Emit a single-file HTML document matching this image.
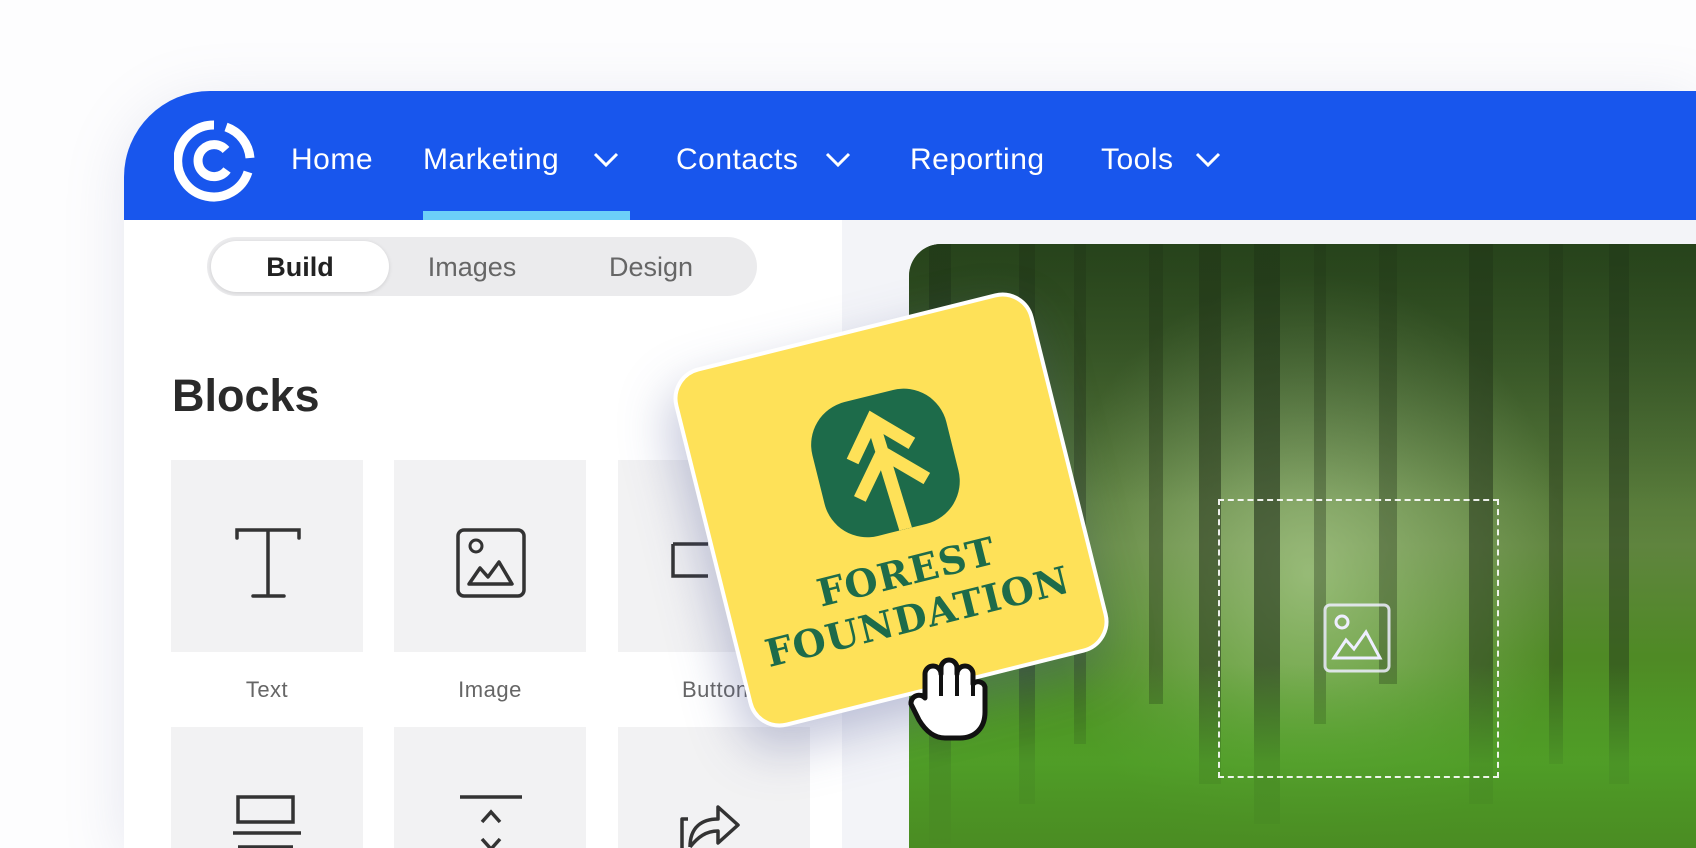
<!DOCTYPE html>
<html style="width:1696px;height:848px;overflow:hidden"><head><meta charset="utf-8"><style>
*{margin:0;padding:0;box-sizing:border-box}
body{width:1696px;height:848px;overflow:hidden;background:#fdfdfe;font-family:"Liberation Sans",sans-serif;position:relative}
.abs{position:absolute}
#frame{left:124px;top:91px;width:1572px;height:757px;border-top-left-radius:86px;overflow:hidden;background:#f3f4f8;box-shadow:0 10px 60px rgba(120,130,170,.18)}
#nav{left:0;top:0;width:100%;height:129px;background:#1856ed}
.nl{position:absolute;top:52px;color:#fff;font-size:30px;letter-spacing:.5px}
.chev{position:absolute;top:60px}
#side{left:0;top:129px;width:718px;height:628px;background:#fff;overflow:hidden}
#seg{left:83px;top:17px;width:550px;height:59px;border-radius:30px;background:#ebebed}
#pill{left:4px;top:4px;width:178px;height:51px;border-radius:26px;background:#fff;box-shadow:0 1px 4px rgba(0,0,0,.12)}
.st{position:absolute;top:15px;font-size:27px;color:#666;width:160px;text-align:center}
.tile{position:absolute;width:192px;height:192px;background:#f2f2f3}
.lab{position:absolute;top:457px;width:192px;text-align:center;font-size:22px;color:#666;letter-spacing:.5px}
#img{left:785px;top:153px;width:787px;height:604px;border-top-left-radius:32px;overflow:hidden;
background:radial-gradient(ellipse 260px 300px at 400px 330px,rgba(200,230,170,.55),rgba(0,0,0,0)),
linear-gradient(180deg,#2f4a22 0%,#4d6e35 30%,#5f843e 50%,#4f8a25 68%,#4e9323 85%,#3f7a1a 100%)}
.tr{position:absolute;top:0;background:#22301a}
</style></head><body>
<div id="frame" class="abs">
 <div id="nav" class="abs">
  <svg class="abs" style="left:50px;top:29px" width="82" height="82" viewBox="0 0 82 82">
   <path d="M52 7 A36 36 0 0 1 76 38" stroke="#fff" stroke-width="9" fill="none"/>
   <path d="M74 52 A36 36 0 1 1 40 5" stroke="#fff" stroke-width="9" fill="none"/>
   <path d="M52 30 A16 16 0 1 0 53 50" stroke="#fff" stroke-width="9" fill="none"/>
  </svg>
  <div class="nl" style="left:167px">Home</div>
  <div class="nl" style="left:299px">Marketing</div>
  <svg class="chev" style="left:468px" width="28" height="18"><path d="M3 3 L14 14 L25 3" stroke="#fff" stroke-width="3" fill="none"/></svg>
  <div class="nl" style="left:552px">Contacts</div>
  <svg class="chev" style="left:700px" width="28" height="18"><path d="M3 3 L14 14 L25 3" stroke="#fff" stroke-width="3" fill="none"/></svg>
  <div class="nl" style="left:786px">Reporting</div>
  <div class="nl" style="left:977px">Tools</div>
  <svg class="chev" style="left:1070px" width="28" height="18"><path d="M3 3 L14 14 L25 3" stroke="#fff" stroke-width="3" fill="none"/></svg>
  <div class="abs" style="left:299px;top:120px;width:207px;height:9px;background:#6ccff8"></div>
 </div>
 <div id="side" class="abs">
  <div id="seg" class="abs"><div id="pill" class="abs"></div>
   <div class="st" style="left:13px;color:#222;font-weight:bold">Build</div>
   <div class="st" style="left:185px">Images</div>
   <div class="st" style="left:364px">Design</div>
  </div>
  <div class="abs" style="left:48px;top:150px;font-size:45px;font-weight:bold;color:#2a2a2a">Blocks</div>
  <div class="tile" style="left:47px;top:240px"><svg width="192" height="192"><path d="M66 78 V70 H128 V78 M97 70 V136 M82 136 H113" stroke="#333" stroke-width="3.5" fill="none" stroke-linecap="round"/></svg></div>
  <div class="tile" style="left:270px;top:240px"><svg width="192" height="192"><rect x="64" y="70" width="66" height="66" rx="6" stroke="#333" stroke-width="3.5" fill="none"/><circle cx="82" cy="86" r="6" stroke="#333" stroke-width="3" fill="none"/><path d="M75 124 L86 108 L94 117 L105 102 L118 124 Z" stroke="#333" stroke-width="3.5" fill="none" stroke-linejoin="round"/></svg></div>
  <div class="tile" style="left:494px;top:240px"><svg width="192" height="192"><path d="M55 84 V116 H90 M55 84 H90" stroke="#333" stroke-width="3.5" fill="none"/></svg></div>
  <div class="lab" style="left:47px">Text</div>
  <div class="lab" style="left:270px">Image</div>
  <div class="lab" style="left:494px;text-align:left;padding-left:64px">Button</div>
  <div class="tile" style="left:47px;top:507px"><svg width="192" height="192"><rect x="67" y="70" width="55" height="25" stroke="#333" stroke-width="3.5" fill="none"/><path d="M62 106 H130 M67 120 H122" stroke="#333" stroke-width="3.5"/></svg></div>
  <div class="tile" style="left:270px;top:507px"><svg width="192" height="192"><path d="M66 70 H128 M88 95 L97 85 L106 95 M88 112 L97 122 L106 112" stroke="#333" stroke-width="3.5" fill="none"/></svg></div>
  <div class="tile" style="left:494px;top:507px"><svg width="192" height="192"><path d="M70 92 H64 V130 M72 120 C72 100 84 92 100 92 V80 L120 98 L100 116 V104 C88 104 80 110 72 120" stroke="#333" stroke-width="3.5" fill="none" stroke-linejoin="round"/></svg></div>
 </div>
 <div id="img" class="abs">
  <div class="tr" style="left:20px;width:22px;height:600px;opacity:.6"></div>
  <div class="tr" style="left:110px;width:16px;height:560px;opacity:.5"></div>
  <div class="tr" style="left:165px;width:12px;height:500px;opacity:.4"></div>
  <div class="tr" style="left:240px;width:14px;height:460px;opacity:.4"></div>
  <div class="tr" style="left:290px;width:22px;height:540px;opacity:.55"></div>
  <div class="tr" style="left:345px;width:26px;height:580px;opacity:.6"></div>
  <div class="tr" style="left:405px;width:12px;height:480px;opacity:.35"></div>
  <div class="tr" style="left:470px;width:18px;height:440px;opacity:.35"></div>
  <div class="tr" style="left:560px;width:24px;height:560px;opacity:.5"></div>
  <div class="tr" style="left:640px;width:14px;height:520px;opacity:.4"></div>
  <div class="tr" style="left:700px;width:20px;height:540px;opacity:.45"></div>
  <div class="abs" style="left:0;top:0;width:787px;height:260px;background:linear-gradient(180deg,rgba(30,60,20,.5),rgba(60,100,40,0))"></div>
  <div class="abs" style="left:0;top:420px;width:787px;height:200px;background:linear-gradient(180deg,rgba(80,150,40,0),rgba(80,160,40,.8) 50%,#4a8a22)"></div>
  <div class="abs" style="left:309px;top:255px;width:281px;height:279px;border:2px dashed rgba(255,255,255,.9)"></div>
  <svg class="abs" style="left:413px;top:358px" width="70" height="72"><rect x="3" y="3" width="64" height="66" rx="5" stroke="#eef" stroke-width="3" fill="none" opacity=".85"/><circle cx="20" cy="20" r="6" stroke="#eef" stroke-width="3" fill="none"/><path d="M12 56 L24 38 L32 47 L44 30 L58 56 Z" stroke="#eef" stroke-width="3" fill="none"/></svg>
 </div>
</div>
<div class="abs" style="left:706px;top:325px;width:370px;height:370px;border-radius:32px;background:#fee158;border:4px solid #fff;transform:rotate(-14deg);box-shadow:-10px 20px 50px rgba(80,90,150,.35)">
 <div class="abs" style="left:118px;top:65px;width:138px;height:138px;border-radius:44px;background:#1d6b4a;overflow:hidden">
  <svg width="138" height="138"><g transform="rotate(-3 69 69)"><path d="M69 22 L69 140 M38 58 L69 24 L100 58 M34 96 L69 58 L104 96" stroke="#fee158" stroke-width="13" fill="none" stroke-linejoin="miter"/></g></svg>
 </div>
 <div class="abs" style="left:0;top:222px;width:362px;text-align:center;font-family:'DejaVu Serif',serif;font-weight:bold;font-size:38px;color:#1d6b4a;line-height:46px;letter-spacing:1px">FOREST<br>FOUNDATION</div>
</div>
<svg class="abs" style="left:905px;top:654px" width="85" height="88" viewBox="0 0 85 88"><path d="M20 34 V20 a8 8 0 0 1 16 0 V14 a8 8 0 0 1 16 0 V20 a8 8 0 0 1 16 0 V30 a7 7 0 0 1 12 3 V58 C80 74 70 84 55 84 H40 C28 84 20 76 14 66 L6 50 a8 8 0 0 1 14 -6 Z" fill="#fff" stroke="#111" stroke-width="5" stroke-linejoin="round"/><path d="M36 20 V42 M52 18 V42 M68 28 V42" stroke="#111" stroke-width="4"/></svg>
</body></html>
